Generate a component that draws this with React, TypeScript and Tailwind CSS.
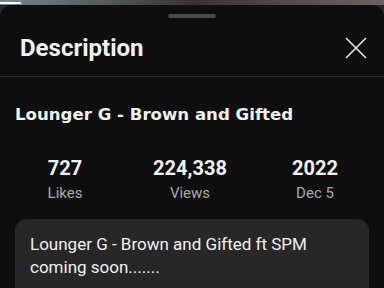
const stats = [
  { value: '727', label: 'Likes' },
  { value: '224,338', label: 'Views' },
  { value: '2022', label: 'Dec 5' },
]

export default function App() {
  return (
    <div className="w-[384px] h-[288px] overflow-hidden bg-[#2a2623]" style={{ fontFamily: 'Roboto, "Liberation Sans", sans-serif' }}>
      {/* video strip behind the sheet */}
      <div className="h-[5px] w-full bg-gradient-to-r from-[#6f8a90] via-[#3a3430] to-[#6b6360] relative">
        <div className="absolute left-0 top-[2px] h-[2px] w-[21px] bg-white" />
      </div>

      <div className="bg-[#0f0f0f] rounded-t-[12px] h-[283px]">
        <div className="flex justify-center pt-[9px]">
          <div className="w-[48px] h-[4px] rounded-full bg-[#4a4a4a]" />
        </div>

        <div className="flex items-center justify-between pl-[20px] pr-[16px] h-[59px] border-b border-[#303030]">
          <h1 className="text-[24px] font-bold text-[#f1f1f1] leading-none mt-[2px]">Description</h1>
          <svg width="24" height="24" viewBox="0 0 24 24" className="text-[#e6e6e6] mt-[1px]">
            <path d="M2 2 L22 22 M22 2 L2 22" stroke="currentColor" strokeWidth="1.6" fill="none" />
          </svg>
        </div>

        <h2
          className="mt-[26px] pl-[15px] text-[16.6px] font-bold text-[#f1f1f1] leading-[24px]"
          style={{ fontFamily: '"DejaVu Sans", sans-serif' }}
        >
          Lounger G - Brown and Gifted
        </h2>

        <div className="flex justify-between pl-[15px] pr-[19px] mt-[29px]">
          {stats.map((s, i) => (
            <div key={i} className="w-[100px] flex flex-col items-center">
              <span className="text-[20px] font-bold leading-[24px] text-[#f1f1f1]">{s.value}</span>
              <span className="text-[15px] leading-[20px] mt-[3px] text-[#aaaaaa]">{s.label}</span>
            </div>
          ))}
        </div>

        <div className="mx-[15px] mt-[16px] rounded-[12px] bg-[#272727] px-[15px] pt-[14px] pb-[20px]">
          <p className="text-[17px] leading-[23px] text-[#f1f1f1]">
            Lounger G - Brown and Gifted ft SPM
            <br />
            coming soon.......
          </p>
        </div>
      </div>
    </div>
  )
}
